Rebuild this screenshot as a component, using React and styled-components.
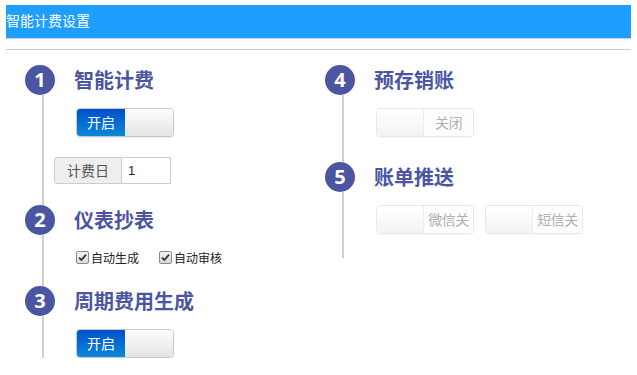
import React from 'react';
import styled, { createGlobalStyle } from 'styled-components';

const GlobalStyle = createGlobalStyle`
    body {
        margin: 0;
        background: #fff;
        font-family: "Noto Sans CJK SC", "Liberation Sans", sans-serif;
    }
`;

const Page = styled.div`
    width: 625px;
    padding: 5px 6px 0;
`;

const Header = styled.div`
    height: 33px;
    background: #1e9fff;
    border-bottom: 1px solid #cfcfcf;
    color: #fff;
    font-size: 14px;
    line-height: 31px;
`;

const Divider = styled.div`
    height: 1px;
    margin-top: 10px;
    background: #cccccc;
`;

const Columns = styled.div`
    display: flex;
    padding: 15px 0 0 19px;
`;

const Column = styled.div`
    width: ${p => p.$width}px;
    display: flex;
    flex-direction: column;
`;

const StepRow = styled.div`
    display: flex;
`;

const Rail = styled.div`
    width: 30px;
    display: flex;
    flex-direction: column;
    flex-shrink: 0;
`;

const Num = styled.div`
    width: 30px;
    height: 30px;
    border-radius: 50%;
    background: #4b55a2;
    color: #fff;
    font-family: "Open Sans", "Liberation Sans", sans-serif;
    font-weight: 700;
    font-size: 20px;
    line-height: 30px;
    text-align: center;
`;

const Line = styled.div`
    flex: 1;
    width: 2px;
    margin-left: 17px;
    background: #d0d0d0;
`;

const Body = styled.div`
    margin-left: 19px;
    padding-bottom: ${p => p.$pb}px;
    display: flex;
    flex-direction: column;
    align-items: flex-start;
`;

const Title = styled.div`
    height: 30px;
    line-height: 30px;
    font-size: 20px;
    font-weight: 700;
    color: #4b55a2;
`;

const Switch = styled.div`
    display: flex;
    width: 98px;
    height: 29px;
    box-sizing: border-box;
    margin: ${p => p.$mt}px 0 0 2px;
    border: 1px solid ${p => (p.$on ? '#c8c8c8' : '#e8e8e8')};
    border-radius: 4px;
    overflow: hidden;
    font-size: 14px;
    box-shadow: 0 1px 1px rgba(0, 0, 0, ${p => (p.$on ? 0.08 : 0.03)});
`;

const SwitchOn = styled.div`
    width: 48px;
    background: linear-gradient(#0050c8, #0a88da);
    color: #fff;
    text-align: center;
    line-height: 27px;
`;

const SwitchKnob = styled.div`
    flex: 1;
    background: ${p => (p.$on ? 'linear-gradient(#fdfdfd, #e4e4e4)' : 'linear-gradient(#ffffff, #f3f3f3)')};
    border-right: ${p => (p.$on ? 'none' : '1px solid #ececec')};
`;

const SwitchOff = styled.div`
    width: 49px;
    background: #fdfdfd;
    color: #b0b0b0;
    text-align: center;
    line-height: 27px;
    white-space: nowrap;
    letter-spacing: -0.5px;
`;

const SwitchGroup = styled.div`
    display: flex;
    gap: 11px;
    margin: 13px 0 0 2px;
    & > div {
        margin: 0;
    }
`;

const InputGroup = styled.div`
    display: flex;
    margin: 20px 0 0 -20px;
    height: 27px;
    font-size: 14px;
`;

const Addon = styled.div`
    width: 66px;
    background: #eeeeee;
    border: 1px solid #cccccc;
    border-radius: 3px 0 0 3px;
    color: #555;
    text-align: center;
    line-height: 25px;
`;

const Field = styled.div`
    width: 42px;
    border: 1px solid #cccccc;
    border-left: none;
    padding-left: 6px;
    line-height: 25px;
    color: #222;
    font-family: "Liberation Sans", sans-serif;
    font-size: 13px;
`;

const Checks = styled.div`
    display: flex;
    gap: 20px;
    margin: 15px 0 0 2px;
`;

const Check = styled.label`
    display: flex;
    align-items: center;
    gap: 2px;
    font-size: 12px;
    color: #222;
    line-height: 15px;
`;

const Box = styled.span`
    width: 11px;
    height: 11px;
    border: 1px solid #8a8a8a;
    border-radius: 2px;
    background: linear-gradient(#f4f4f4, #d8d8d8);
    display: flex;
    align-items: center;
    justify-content: center;
`;

function Checkbox({ label }) {
    return (
        <Check>
            <Box>
                <svg width="9" height="9" viewBox="0 0 9 9">
                    <path d="M1 4.6 L3.4 7 L8 1.6" fill="none" stroke="#333" strokeWidth="1.8" />
                </svg>
            </Box>
            {label}
        </Check>
    );
}

function OnSwitch() {
    return (
        <Switch $on $mt={13}>
            <SwitchOn>开启</SwitchOn>
            <SwitchKnob $on />
        </Switch>
    );
}

function OffSwitch({ text, mt = 0 }) {
    return (
        <Switch $mt={mt}>
            <SwitchKnob />
            <SwitchOff>{text}</SwitchOff>
        </Switch>
    );
}

function Step({ n, title, pb, children }) {
    return (
        <StepRow>
            <Rail>
                <Num>{n}</Num>
                <Line />
            </Rail>
            <Body $pb={pb}>
                <Title>{title}</Title>
                {children}
            </Body>
        </StepRow>
    );
}

export default function App() {
    return (
        <>
            <GlobalStyle />
            <Page>
                <Header>智能计费设置</Header>
                <Divider />
                <Columns>
                    <Column $width={300}>
                        <Step n="1" title="智能计费" pb={21}>
                            <OnSwitch />
                            <InputGroup>
                                <Addon>计费日</Addon>
                                <Field>1</Field>
                            </InputGroup>
                        </Step>
                        <Step n="2" title="仪表抄表" pb={21}>
                            <Checks>
                                <Checkbox label="自动生成" />
                                <Checkbox label="自动审核" />
                            </Checks>
                        </Step>
                        <Step n="3" title="周期费用生成" pb={0}>
                            <OnSwitch />
                        </Step>
                    </Column>
                    <Column $width={300}>
                        <Step n="4" title="预存销账" pb={25}>
                            <OffSwitch text="关闭" mt={13} />
                        </Step>
                        <Step n="5" title="账单推送" pb={24}>
                            <SwitchGroup>
                                <OffSwitch text="微信关" />
                                <OffSwitch text="短信关" />
                            </SwitchGroup>
                        </Step>
                    </Column>
                </Columns>
            </Page>
        </>
    );
}
